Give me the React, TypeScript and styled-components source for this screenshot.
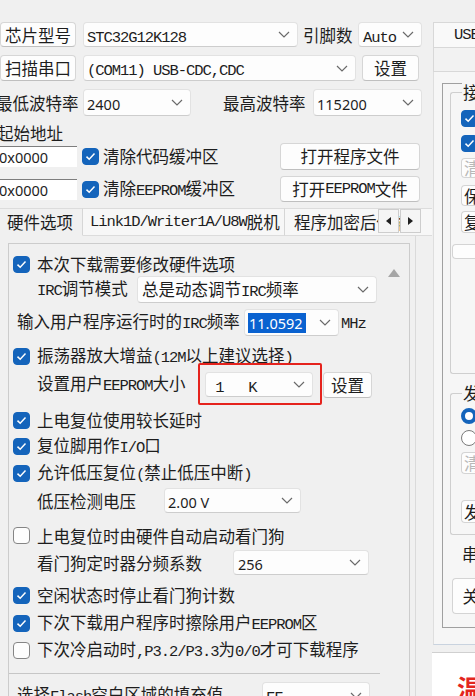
import React from 'react';
import styled, { createGlobalStyle } from 'styled-components';

const CJK = `"Noto Sans CJK SC", "Noto Sans", sans-serif`;
const MONO = `"Liberation Mono", "Noto Sans CJK SC", monospace`;
const SANS = `"Noto Sans", "Open Sans", sans-serif`;

const GlobalStyle = createGlobalStyle`
  html, body {
    margin: 0;
    padding: 0;
  }
  body {
    width: 475px;
    height: 696px;
    overflow: hidden;
    background: #f0f0f0;
    color: #1d1d1d;
    font-family: ${CJK};
    font-size: 16.5px;
  }
`;

const Screen = styled.div`
  display: flex;
  width: 475px;
  height: 696px;
  overflow: hidden;
  background: #f0f0f0;
`;

const LeftCol = styled.div`
  flex: none;
  width: 432px;
  display: flex;
  flex-direction: column;
  padding-top: 22px;
`;

const Row = styled.div<{ $h: number; $mt?: number; $pr?: number }>`
  flex: none;
  display: flex;
  align-items: center;
  height: ${p => p.$h}px;
  margin-top: ${p => p.$mt ?? 0}px;
  padding-right: ${p => p.$pr ?? 0}px;
`;

const Text = styled.span<{ $ml?: number; $w?: number; $color?: string }>`
  flex: none;
  margin-left: ${p => p.$ml ?? 0}px;
  width: ${p => (p.$w ? `${p.$w}px` : 'auto')};
  font-family: ${CJK};
  font-size: 16.5px;
  line-height: 20px;
  white-space: pre;
  color: ${p => p.$color ?? 'inherit'};
`;

// half-width latin, like the SimSun latin in the original
const M = styled.span`
  font-family: ${MONO};
  font-size: 15.5px;
  letter-spacing: -1.05px;
`;

const Num = styled.span`
  font-family: ${SANS};
  font-size: 14.5px;
`;

const Button = styled.div<{ $w: number; $h?: number; $ml?: number; $auto?: boolean }>`
  flex: none;
  box-sizing: border-box;
  width: ${p => p.$w}px;
  height: ${p => p.$h ?? 26}px;
  margin-left: ${p => (p.$auto ? 'auto' : `${p.$ml ?? 0}px`)};
  display: flex;
  align-items: center;
  justify-content: center;
  border: 1px solid #d6d6d6;
  border-bottom-color: #bfbfbf;
  border-radius: 4px;
  background: #fdfdfd;
  font-size: 16.5px;
  white-space: nowrap;
`;

const SelectBox = styled.div<{ $w: number; $h?: number; $ml?: number; $pl?: number; $marked?: boolean }>`
  flex: none;
  position: relative;
  box-sizing: border-box;
  width: ${p => p.$w}px;
  height: ${p => p.$h ?? 26}px;
  margin-left: ${p => p.$ml ?? 0}px;
  padding: 0 7px 0 ${p => p.$pl ?? 3}px;
  display: flex;
  align-items: center;
  justify-content: space-between;
  background: #fdfdfd;
  border: 1px solid #e2e2e2;
  border-bottom-color: #cdcdcd;
  border-radius: 4px;
  white-space: pre;

  ${p =>
    p.$marked &&
    `
    &::after {
      content: '';
      position: absolute;
      top: -10px;
      bottom: -9px;
      left: -8px;
      right: -10px;
      border: 2px solid #e5231d;
      border-radius: 2px;
    }
  `}
`;

const ChevronSvg = styled.svg`
  flex: none;
`;

const Chevron = () => (
  <ChevronSvg width="12" height="7" viewBox="0 0 12 7">
    <polyline points="1,1 6,6 11,1" fill="none" stroke="#6a6a6a" strokeWidth="1.2" />
  </ChevronSvg>
);

const Select = ({ children, ...rest }: React.ComponentProps<typeof SelectBox>) => (
  <SelectBox {...rest}>
    <span>{children}</span>
    <Chevron />
  </SelectBox>
);

const Box = styled.span<{ $on: boolean; $ml?: number }>`
  flex: none;
  box-sizing: border-box;
  width: 17px;
  height: 17px;
  margin-left: ${p => p.$ml ?? 0}px;
  border-radius: 4px;
  background: ${p => (p.$on ? '#1464bb' : '#fdfdfd')};
  border: 1px solid ${p => (p.$on ? '#1464bb' : '#858585')};
  display: flex;
  align-items: center;
  justify-content: center;
`;

const Check = ({ on = true, ml }: { on?: boolean; ml?: number }) => (
  <Box $on={on} $ml={ml}>
    {on && (
      <svg width="11" height="9" viewBox="0 0 11 9">
        <polyline points="1.5,4.6 4.2,7.2 9.5,1.6" fill="none" stroke="#fff" strokeWidth="1.5" />
      </svg>
    )}
  </Box>
);

const AddrInput = styled.div`
  flex: none;
  box-sizing: border-box;
  width: 82px;
  height: 21px;
  margin-left: -5px;
  padding-left: 4px;
  display: flex;
  align-items: center;
  background: #ffffff;
  border-top: 1px solid #7e7e7e;
  font-family: ${SANS};
  font-size: 14.5px;
`;

const Tabs = styled.div`
  flex: none;
  position: relative;
  display: flex;
  height: 28px;
  margin-top: 6px;
  overflow: hidden;
`;

const Tab = styled.div<{ $w: number; $active?: boolean; $pl?: number }>`
  flex: none;
  box-sizing: border-box;
  width: ${p => p.$w}px;
  height: 28px;
  padding-left: ${p => p.$pl ?? 7}px;
  display: flex;
  align-items: center;
  background: ${p => (p.$active ? '#f0f0f0' : '#f7f7f7')};
  border-top: 1px solid #dcdcdc;
  border-right: 1px solid #d6d6d6;
  border-bottom: 1px solid ${p => (p.$active ? 'transparent' : '#dcdcdc')};
  font-size: 16.5px;
  white-space: nowrap;
`;

const TabArrows = styled.div`
  position: absolute;
  left: 378px;
  top: 1px;
  display: flex;
  gap: 1px;
`;

const ArrowBtn = styled.div`
  box-sizing: border-box;
  width: 21px;
  height: 24px;
  display: flex;
  align-items: center;
  justify-content: center;
  background: #f5f5f5;
  border: 1px solid #cdcdcd;
`;

const TabPage = styled.div`
  flex: 1;
  display: flex;
  margin-right: 16px;
  padding: 7px 5px 0 8px;
  border-right: 1px solid #dadada;
  min-height: 0;
`;

const ScrollBox = styled.div`
  flex: 1;
  display: flex;
  border: 1px solid #cccccc;
  border-bottom: none;
  background: #f0f0f0;
  min-height: 0;
  overflow: hidden;
`;

const Content = styled.div`
  flex: 1;
  display: flex;
  flex-direction: column;
  padding-left: 4px;
  overflow: hidden;
`;

const ScrollBar = styled.div`
  flex: none;
  width: 24px;
  padding: 14px 0 0 3px;
  box-sizing: border-box;
`;

const Separator = styled.div`
  flex: none;
  height: 1px;
  margin: 11px 5px 0 -4px;
  background: #c6c6c6;
`;

const Selected = styled.span`
  background: #0a62d0;
  color: #ffffff;
  padding: 0 3px 0 1px;
  font-family: ${SANS};
  font-size: 14.5px;
`;

/* right side column, mostly clipped by the window edge */

const RightCol = styled.div`
  flex: 1;
  display: flex;
  flex-direction: column;
  padding-top: 22px;
  min-width: 0;
  overflow: hidden;
`;

const UsbTab = styled.div`
  flex: none;
  height: 50px;
  margin-left: 1px;
  box-sizing: border-box;
  border: 1px solid #d8d8d8;
  border-right: none;
  background: #f2f2f2;
`;

const UsbHead = styled.div`
  height: 25px;
  box-sizing: border-box;
  padding-left: 20px;
  display: flex;
  align-items: center;
  border-bottom: 1px solid #d8d8d8;
  background: #f9f9f9;
  white-space: nowrap;
`;

const Panel = styled.div`
  flex: none;
  height: 573px;
  box-sizing: border-box;
  margin-left: 1px;
  padding: 11px 0 0 8px;
  background: #f6f6f6;
  border-left: 1px solid #dedede;
  border-bottom: 1px solid #c9d3df;
`;

const OuterGroup = styled.div`
  box-sizing: border-box;
  width: 80px;
  height: 545px;
  padding: 0 0 0 7px;
  border: 1px solid #a0a0a0;
  border-right: none;
  display: flex;
  flex-direction: column;
`;

const Group = styled.div<{ $h: number; $mt: number }>`
  flex: none;
  position: relative;
  box-sizing: border-box;
  height: ${p => p.$h}px;
  margin-top: ${p => p.$mt}px;
  padding-left: 11px;
  border: 1px solid #cfcfcf;
  border-right: none;
  border-radius: 3px 0 0 3px;
  display: flex;
  flex-direction: column;
`;

const Legend = styled.span`
  position: absolute;
  top: -11px;
  left: 11px;
  padding: 0 1px;
  background: #f6f6f6;
  font-size: 16.5px;
  line-height: 20px;
  white-space: nowrap;
`;

const SideBtn = styled.div<{ $h: number; $mt: number; $ml?: number; $faint?: boolean }>`
  flex: none;
  box-sizing: border-box;
  width: 60px;
  height: ${p => p.$h}px;
  margin-top: ${p => p.$mt}px;
  margin-left: ${p => p.$ml ?? -1}px;
  padding-left: 2px;
  display: flex;
  align-items: center;
  border: 1px solid #d4d4d4;
  border-right: none;
  border-radius: 4px 0 0 4px;
  background: #fdfdfd;
  color: ${p => (p.$faint ? '#b8b8b8' : 'inherit')};
  font-size: 16.5px;
  white-space: nowrap;
`;

const Radio = styled.span<{ $on?: boolean; $mt: number }>`
  flex: none;
  box-sizing: border-box;
  width: 16px;
  height: 16px;
  margin-top: ${p => p.$mt}px;
  margin-left: -1px;
  border-radius: 50%;
  background: #ffffff;
  border: ${p => (p.$on ? '4.5px solid #1464bb' : '1px solid #7a7a7a')};
`;

const StackCheck = styled.div<{ $mt: number }>`
  flex: none;
  display: flex;
  margin-top: ${p => p.$mt}px;
  margin-left: -1px;
`;

const Hint = styled.span<{ $mt: number }>`
  flex: none;
  margin-top: ${p => p.$mt}px;
  margin-left: 12px;
  font-size: 16.5px;
  line-height: 18px;
  white-space: nowrap;
`;

const WhiteBox = styled.div`
  flex: 1;
  margin-top: 7px;
  margin-left: -2px;
  padding: 20px 0 0 26px;
  background: #ffffff;
  border-top: 1px solid #d0d0d0;
  border-left: 1px solid #d0d0d0;
  color: #e3261f;
  font-size: 25px;
  font-weight: 700;
  line-height: 28px;
  white-space: nowrap;
`;

const TriLeft = () => (
  <svg width="5" height="8" viewBox="0 0 5 8">
    <polygon points="5,0 5,8 0,4" fill="#202020" />
  </svg>
);

const TriRight = () => (
  <svg width="5" height="8" viewBox="0 0 5 8">
    <polygon points="0,0 0,8 5,4" fill="#202020" />
  </svg>
);

const App: React.FC = () => {
  return (
    <Screen>
      <GlobalStyle />
      <LeftCol>
        <Row $h={25}>
          <Button $w={76} $h={25}>芯片型号</Button>
          <Select $w={215} $h={25} $ml={7}><M>STC32G12K128</M></Select>
          <Text $ml={5} $w={55}>引脚数</Text>
          <Select $w={64} $h={25} $pl={4}><M>Auto</M></Select>
        </Row>

        <Row $h={26} $mt={8}>
          <Button $w={76}>扫描串口</Button>
          <Select $w={273} $ml={7}><M>(COM11) USB-CDC,CDC</M></Select>
          <Button $w={57} $ml={6}>设置</Button>
        </Row>

        <Row $h={27} $mt={8}>
          <Text $ml={-4} $w={87}>最低波特率</Text>
          <Select $w={108} $h={27}><Num>2400</Num></Select>
          <Text $ml={32} $w={90}>最高波特率</Text>
          <Select $w={109} $h={27}><Num>115200</Num></Select>
        </Row>

        <Row $h={20} $mt={7}>
          <Text $ml={-3}>起始地址</Text>
        </Row>

        <Row $h={26} $pr={12}>
          <AddrInput>0x0000</AddrInput>
          <Check ml={5} />
          <Text $ml={4}>清除代码缓冲区</Text>
          <Button $w={140} $h={27} $auto>打开程序文件</Button>
        </Row>

        <Row $h={26} $mt={7} $pr={12}>
          <AddrInput>0x0000</AddrInput>
          <Check ml={5} />
          <Text $ml={4}>清除<M>EEPROM</M>缓冲区</Text>
          <Button $w={140} $auto>打开<M>EEPROM</M>文件</Button>
        </Row>

        <Tabs>
          <Tab $w={83} $active>硬件选项</Tab>
          <Tab $w={202}><M>Link1D/Writer1A/U8W</M>脱机</Tab>
          <Tab $w={150} $pl={9}>程序加密后传输</Tab>
          <TabArrows>
            <ArrowBtn><TriLeft /></ArrowBtn>
            <ArrowBtn><TriRight /></ArrowBtn>
          </TabArrows>
        </Tabs>

        <TabPage>
          <ScrollBox>
            <Content>
              <Row $h={24} $mt={8}>
                <Check />
                <Text $ml={7}>本次下载需要修改硬件选项</Text>
              </Row>
              <Row $h={26}>
                <Text $ml={24} $w={100}><M>IRC</M>调节模式</Text>
                <Select $w={240} $h={27} $pl={4}>总是动态调节<M>IRC</M>频率</Select>
              </Row>
              <Row $h={27} $mt={7}>
                <Text $ml={4} $w={227}>输入用户程序运行时的<M>IRC</M>频率</Text>
                <SelectBox $w={95} $h={27}>
                  <Selected>11.0592</Selected>
                  <Chevron />
                </SelectBox>
                <Text $ml={2}><M>MHz</M></Text>
              </Row>
              <Row $h={25} $mt={8}>
                <Check />
                <Text $ml={7}>振荡器放大增益<M>(12M</M>以上建议选择<M>)</M></Text>
              </Row>
              <Row $h={27} $mt={2}>
                <Text $ml={24} $w={168}>设置用户<M>EEPROM</M>大小</Text>
                <Select $w={108} $h={25} $pl={1} $marked><M> 1   K</M></Select>
                <Button $w={49} $ml={10}>设置</Button>
              </Row>
              <Row $h={24} $mt={10}>
                <Check />
                <Text $ml={7}>上电复位使用较长延时</Text>
              </Row>
              <Row $h={25} $mt={2}>
                <Check />
                <Text $ml={7}>复位脚用作<M>I/O</M>口</Text>
              </Row>
              <Row $h={25} $mt={2}>
                <Check />
                <Text $ml={7}>允许低压复位<M>(</M>禁止低压中断<M>)</M></Text>
              </Row>
              <Row $h={27} $mt={1}>
                <Text $ml={24} $w={127}>低压检测电压</Text>
                <Select $w={137} $h={25}><Num>2.00 V</Num></Select>
              </Row>
              <Row $h={25} $mt={9}>
                <Check on={false} />
                <Text $ml={7}>上电复位时由硬件自动启动看门狗</Text>
              </Row>
              <Row $h={27} $mt={1}>
                <Text $ml={24} $w={196}>看门狗定时器分频系数</Text>
                <Select $w={136} $h={25} $pl={4}><Num>256</Num></Select>
              </Row>
              <Row $h={24} $mt={7}>
                <Check />
                <Text $ml={7}>空闲状态时停止看门狗计数</Text>
              </Row>
              <Row $h={25} $mt={4}>
                <Check />
                <Text $ml={7}>下次下载用户程序时擦除用户<M>EEPROM</M>区</Text>
              </Row>
              <Row $h={24} $mt={2}>
                <Check on={false} />
                <Text $ml={7}>下次冷启动时<M>,P3.2/P3.3</M>为<M>0/0</M>才可下载程序</Text>
              </Row>
              <Separator />
              <Row $h={26} $mt={8}>
                <Text $ml={4} $w={245}>选择<M>Flash</M>空白区域的填充值</Text>
                <Select $w={108} $h={26}><M>FF</M></Select>
              </Row>
            </Content>
            <ScrollBar>
              <svg width="12" height="8" viewBox="0 0 12 8">
                <polygon points="6,0 12,8 0,8" fill="#a6a6a6" />
              </svg>
            </ScrollBar>
          </ScrollBox>
        </TabPage>
      </LeftCol>

      <RightCol>
        <UsbTab>
          <UsbHead><M>USB</M></UsbHead>
        </UsbTab>
        <Panel>
          <OuterGroup>
            <Group $h={282} $mt={8}>
              <Legend>接口</Legend>
              <StackCheck $mt={17}><Check /></StackCheck>
              <StackCheck $mt={8}><Check /></StackCheck>
              <SideBtn $h={20} $mt={6} $faint>清除</SideBtn>
              <SideBtn $h={21} $mt={7}>保存</SideBtn>
              <SideBtn $h={22} $mt={5}>复位</SideBtn>
              <SideBtn $h={15} $mt={11} $ml={-10} />
            </Group>
            <Group $h={142} $mt={19}>
              <Legend>发送</Legend>
              <Radio $on $mt={14} />
              <Radio $mt={6} />
              <SideBtn $h={22} $mt={6} $faint>清空</SideBtn>
              <SideBtn $h={23} $mt={26}>发送</SideBtn>
            </Group>
            <Hint $mt={10}>串口</Hint>
            <SideBtn $h={36} $mt={15} $ml={2}>&nbsp;&nbsp;关闭</SideBtn>
          </OuterGroup>
        </Panel>
        <WhiteBox>温馨提示</WhiteBox>
      </RightCol>
    </Screen>
  );
};

export default App;
